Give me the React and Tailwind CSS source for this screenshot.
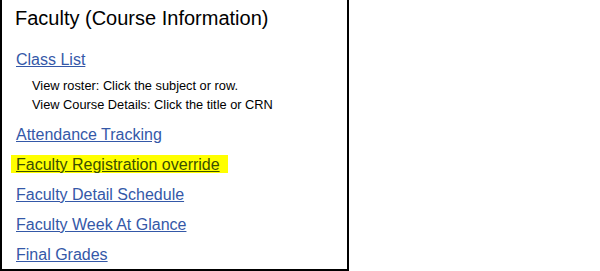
const LINKS = [
  "Attendance Tracking",
  "Faculty Registration override",
  "Faculty Detail Schedule",
  "Faculty Week At Glance",
  "Final Grades",
];

export default function App() {
  return (
    <div className="w-[600px] h-[271px] bg-white font-['Liberation_Sans',Arial,sans-serif]">
      <div className="w-[349px] h-[271px] border-x-2 border-b-2 border-black pl-[11px]">
        <h2 className="pt-[7px] pl-[2px] text-[20px] leading-[23px] text-black">
          Faculty (Course Information)
        </h2>

        <ul className="mt-[21px] pl-[3px] flex flex-col gap-[12px]">
          <li className="text-[16px] leading-[18px]">
            <a href="#" className="text-[#3458a8] underline">
              Class List
            </a>
            <div className="mt-[7px] pl-[16px] text-[12.8px] leading-[19px] text-black">
              <p>View roster: Click the subject or row.</p>
              <p>View Course Details: Click the title or CRN</p>
            </div>
          </li>
          {LINKS.map((label) => {
            const marked = label === "Faculty Registration override";
            return (
              <li key={label} className="text-[16px] leading-[18px]">
                {marked ? (
                  <a
                    href="#"
                    className="-ml-[5px] pl-[5px] pr-[8px] pt-[1px] bg-[#ffff00] text-[#3a4f00] underline"
                  >
                    {label}
                  </a>
                ) : (
                  <a href="#" className="text-[#3458a8] underline">
                    {label}
                  </a>
                )}
              </li>
            );
          })}
        </ul>
      </div>
    </div>
  );
}
